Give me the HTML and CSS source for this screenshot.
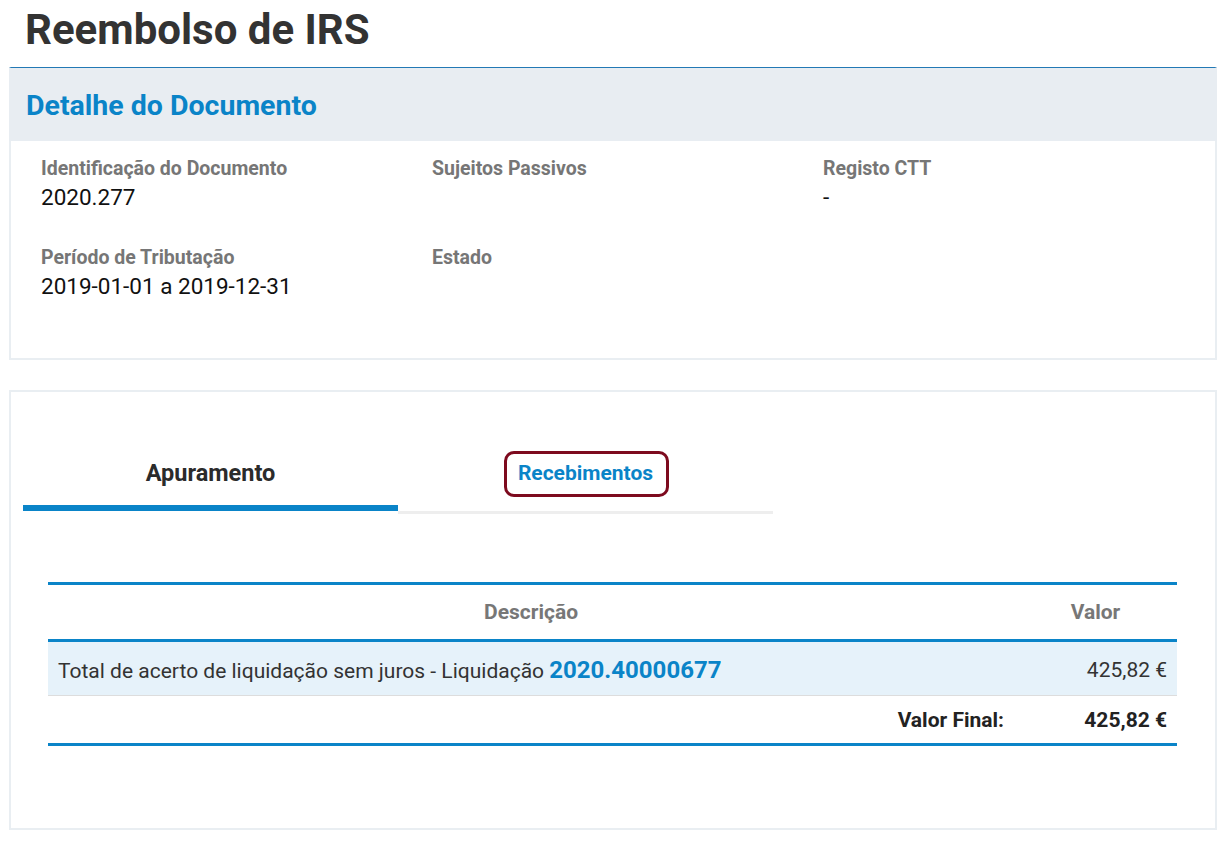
FILE: index.html
```html
<!DOCTYPE html>
<html lang="pt">
<head>
<meta charset="utf-8">
<title>Reembolso de IRS</title>
<link rel="stylesheet" href="styles.css">
</head>
<body>
<div class="page">
  <h1 class="page-title">Reembolso de IRS</h1>

  <section class="card card-detail">
    <div class="card-header">
      <h2 class="card-title">Detalhe do Documento</h2>
    </div>
    <div class="fields">
      <div class="field">
        <div class="field-label">Identificação do Documento</div>
        <div class="field-value">2020.277</div>
      </div>
      <div class="field">
        <div class="field-label">Sujeitos Passivos</div>
        <div class="field-value"></div>
      </div>
      <div class="field">
        <div class="field-label">Registo CTT</div>
        <div class="field-value">-</div>
      </div>
      <div class="field">
        <div class="field-label">Período de Tributação</div>
        <div class="field-value">2019-01-01 a 2019-12-31</div>
      </div>
      <div class="field">
        <div class="field-label">Estado</div>
        <div class="field-value"></div>
      </div>
    </div>
  </section>

  <section class="card card-tabs">
    <div class="tabs">
      <div class="tab tab-active">Apuramento</div>
      <div class="tab tab-inactive"><span class="tab-link">Recebimentos</span></div>
    </div>

    <table class="summary">
      <colgroup>
        <col class="col-desc">
        <col class="col-val">
      </colgroup>
      <thead>
        <tr>
          <th>Descrição</th>
          <th>Valor</th>
        </tr>
      </thead>
      <tbody>
        <tr class="row-item">
          <td class="desc">Total de acerto de liquidação sem juros - Liquidação <a class="doc-link">2020.40000677</a></td>
          <td class="val">425,82 €</td>
        </tr>
        <tr class="row-total">
          <td class="total-label">Valor Final:</td>
          <td class="val">425,82 €</td>
        </tr>
      </tbody>
    </table>
  </section>
</div>
</body>
</html>
```

FILE: styles.css
```css
* { box-sizing: border-box; }

html, body {
  margin: 0;
  padding: 0;
  background: #ffffff;
}

body {
  font-family: Roboto, "Liberation Sans", Arial, sans-serif;
  color: #333333;
}

.page {
  padding: 0 9px;
}

.page-title {
  margin: 4px 0 11px 16px;
  font-size: 42px;
  line-height: 52px;
  font-weight: 700;
  color: #333333;
}

.card {
  border: 2px solid #e9eef2;
  background: #ffffff;
}

.card-detail {
  border-top: 1px solid #2379b5;
  padding-bottom: 56px;
}

.card-header {
  background: #e8edf2;
  height: 73px;
  display: flex;
  align-items: center;
  margin: 0 -2px;
  padding-left: 17px;
}

.card-title {
  margin: 0;
  font-size: 28.5px;
  font-weight: 700;
  color: #0a84c8;
  line-height: 30px;
  padding-top: 2px;
}

.fields {
  display: grid;
  grid-template-columns: repeat(3, 391px);
  row-gap: 33px;
  padding: 16px 0 0 30px;
}

.field-label {
  font-size: 19.5px;
  line-height: 24px;
  font-weight: 700;
  color: #767676;
}

.field-value {
  font-size: 22.5px;
  line-height: 32px;
  color: #111111;
  min-height: 32px;
}

.card-tabs {
  margin-top: 30px;
  padding: 49px 38px 82px 12px;
}

.tabs {
  display: flex;
  align-items: flex-start;
  width: 750px;
}

.tab {
  width: 375px;
  text-align: center;
  line-height: 24px;
  font-weight: 700;
  padding-top: 20px;
}

.tab-active {
  font-size: 23.5px;
  color: #2b2b2b;
  padding-bottom: 20px;
  border-bottom: 6px solid #0a84c8;
}

.tab-inactive {
  font-size: 21px;
  padding-bottom: 26px;
  border-bottom: 3px solid #eeeeee;
}

.tab-link {
  position: relative;
  color: #0a84c8;
}

.tab-link::after {
  content: "";
  position: absolute;
  left: -14px;
  right: -16px;
  top: -10px;
  bottom: -12px;
  border: 3px solid #7d0a1e;
  border-radius: 10px;
}

.summary {
  margin: 68px 0 0 25px;
  width: 1129px;
  border-collapse: collapse;
  border-top: 3px solid #0a84c8;
  border-bottom: 3px solid #0a84c8;
}

.col-desc { width: 966px; }
.col-val { width: 163px; }

.summary th {
  height: 57px;
  padding: 0;
  font-size: 21px;
  font-weight: 700;
  color: #777777;
  text-align: center;
  vertical-align: middle;
  border-bottom: 3px solid #0a84c8;
}

.summary td {
  padding: 0 10px;
  vertical-align: middle;
}

.row-item td {
  height: 55px;
  background: #e6f2fa;
  border-bottom: 1px solid #dddddd;
  font-size: 21px;
  color: #333333;
}

.row-item .desc {
  padding-top: 3px;
}

.doc-link {
  font-size: 24px;
  font-weight: 700;
  color: #0a84c8;
  text-decoration: none;
}

.val {
  text-align: right;
}

.row-item .val {
  padding-top: 2px;
}

.row-total td {
  height: 49px;
  font-size: 21px;
  font-weight: 700;
  color: #222222;
}

.total-label {
  text-align: right;
}
```
